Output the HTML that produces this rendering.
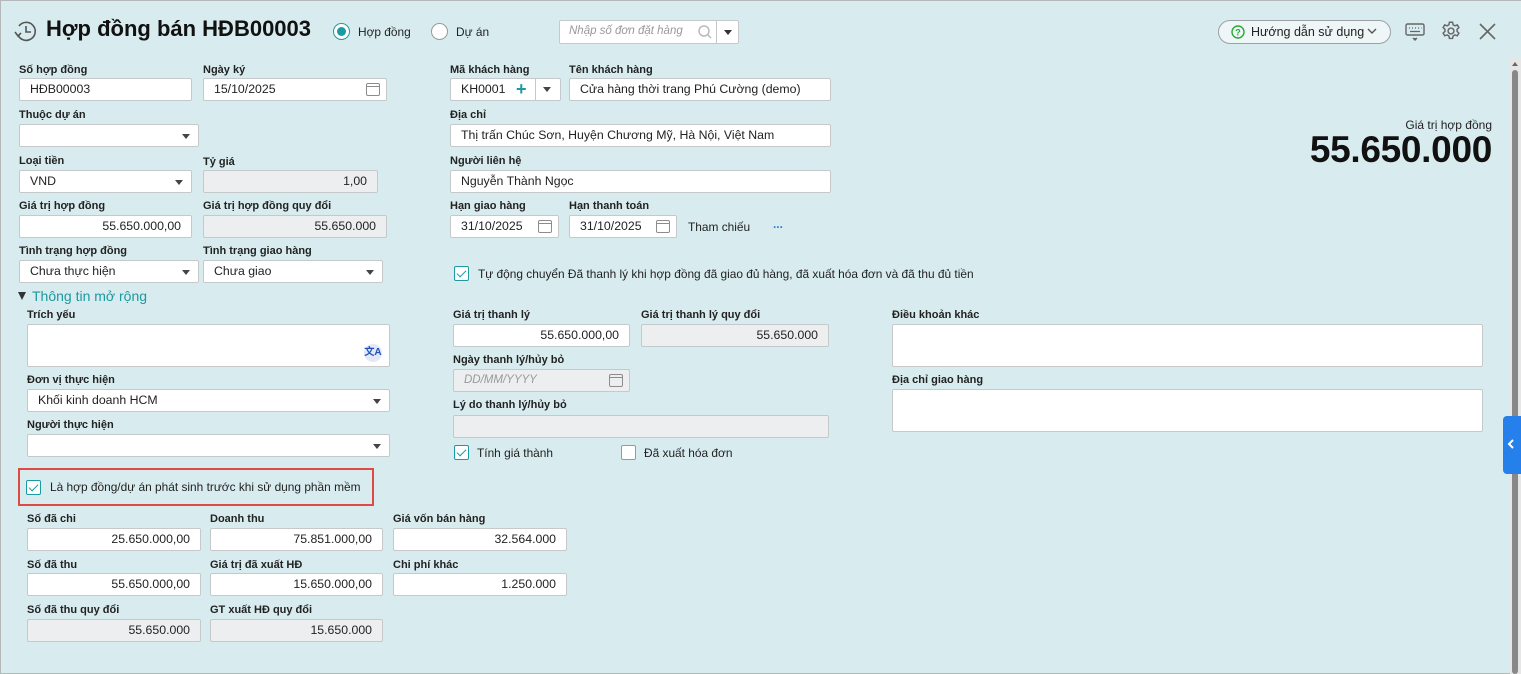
<!DOCTYPE html>
<html><head><meta charset="utf-8">
<style>
*{box-sizing:border-box;margin:0;padding:0}
body{width:1521px;height:674px;overflow:hidden;background:#d8ecef;font-family:"Liberation Sans",Arial,sans-serif;color:#212121;position:relative}
.frame{position:absolute;left:0;top:0;width:1521px;height:674px;border:1px solid #b4b8ba;border-right:none}
.a{position:absolute}
.l{position:absolute;font-size:11px;font-weight:bold;color:#222;white-space:nowrap;line-height:13px}
.i{position:absolute;height:23px;background:#fff;border:1px solid #c5c9cc;border-radius:2px;font-size:12.3px;line-height:21px;padding:0 10px;white-space:nowrap;color:#222}
.g{background:#eceef0}
.r{text-align:right}
.dd::after{content:"";position:absolute;right:8px;top:9px;border-left:4px solid transparent;border-right:4px solid transparent;border-top:5px solid #444}
.cal{position:absolute;right:6px;top:4px;width:14px;height:13px;border:1px solid #8c8c8c;border-radius:2px}
.cal::before{content:"";position:absolute;left:0;right:0;top:2px;border-top:1px solid #8c8c8c}
.cb{position:absolute;width:15px;height:15px;border:1px solid #1c9aa3;background:#fff;border-radius:2px}
.cb.c::after{content:"";position:absolute;left:4px;top:1px;width:4px;height:8px;border:solid #1c9aa3;border-width:0 1.5px 1.5px 0;transform:rotate(45deg)}
.cb.u{border-color:#999}
.t{position:absolute;font-size:11.9px;white-space:nowrap;color:#222;line-height:15px}
</style></head><body>
<div class="frame"></div>

<!-- header -->
<svg class="a" style="left:13px;top:19px" width="26" height="26" viewBox="0 0 26 26" fill="none" stroke="#555" stroke-width="1.6"><path d="M5 16 A9 9 0 1 0 6 7"/><path d="M13 7v6h5"/><path d="M2 13l3 4 3-3"/></svg>
<div class="a" style="left:46px;top:16px;font-size:22px;font-weight:bold;color:#111;white-space:nowrap">Hợp đồng bán HĐB00003</div>
<div class="a" style="left:333px;top:23px;width:17px;height:17px;border:1px solid #1c9aa3;border-radius:50%;background:#fff"><div class="a" style="left:3px;top:3px;width:9px;height:9px;border-radius:50%;background:#1c9aa3"></div></div>
<div class="t" style="left:358px;top:25px">Hợp đồng</div>
<div class="a" style="left:431px;top:23px;width:17px;height:17px;border:1px solid #999;border-radius:50%;background:#fff"></div>
<div class="t" style="left:456px;top:25px">Dự án</div>
<div class="i" style="left:559px;top:20px;width:180px;height:24px;padding-left:9px;color:#999;font-style:italic;font-size:11.5px">Nhập số đơn đặt hàng</div>
<svg class="a" style="left:697px;top:24px" width="16" height="16" viewBox="0 0 16 16" fill="none" stroke="#bbb" stroke-width="1.5"><circle cx="7" cy="7" r="5"/><path d="M11 11l3 3"/></svg>
<div class="a" style="left:716px;top:21px;width:1px;height:22px;background:#c5c9cc"></div>
<div class="a" style="left:724px;top:30px;border-left:4px solid transparent;border-right:4px solid transparent;border-top:5px solid #333"></div>

<div class="a" style="left:1218px;top:20px;width:173px;height:24px;border:1px solid #9aa0a4;border-radius:12px;background:#eef6f7"></div>
<svg class="a" style="left:1231px;top:25px" width="14" height="14" viewBox="0 0 14 14"><circle cx="7" cy="7" r="6" fill="none" stroke="#2aa836" stroke-width="1.4"/><text x="7" y="10.5" font-size="9" font-weight="bold" text-anchor="middle" fill="#2aa836" font-family="Liberation Sans">?</text></svg>
<div class="t" style="left:1251px;top:25px;font-size:12.5px">Hướng dẫn sử dụng</div>
<svg class="a" style="left:1367px;top:27px" width="10" height="8" viewBox="0 0 10 8" fill="none" stroke="#555" stroke-width="1.4"><path d="M1 2l4 4 4-4"/></svg>
<svg class="a" style="left:1405px;top:22px" width="20" height="20" viewBox="0 0 20 20" fill="none" stroke="#666" stroke-width="1.4"><rect x="1" y="2" width="18" height="11" rx="1.5"/><path d="M4 6h1M7 6h1M10 6h1M13 6h1M16 6h0.5M5 9.5h10" stroke-width="1.2"/><path d="M8 16l2 2 2-2" fill="#666"/></svg>
<svg class="a" style="left:1440px;top:20px" width="22" height="22" viewBox="0 0 24 24" fill="none" stroke="#666" stroke-width="1.6"><circle cx="12" cy="12" r="3.2"/><path d="M10.3 2.5h3.4l.6 2.7 2 1.1 2.6-.9 1.7 2.9-2 1.9v2.2l2 1.9-1.7 2.9-2.6-.9-2 1.1-.6 2.7h-3.4l-.6-2.7-2-1.1-2.6.9-1.7-2.9 2-1.9v-2.2l-2-1.9 1.700-2.9 2.6.9 2-1.1z"/></svg>
<svg class="a" style="left:1479px;top:23px" width="17" height="17" viewBox="0 0 17 17" stroke="#666" stroke-width="1.6"><path d="M1 1l15 15M16 1L1 16"/></svg>

<!-- scrollbar -->
<div class="a" style="left:1510px;top:58px;width:11px;height:616px;background:#e6e6e6"></div>
<div class="a" style="left:1512px;top:70px;width:6px;height:604px;background:#888;border-radius:3px"></div>
<div class="a" style="left:1512px;top:62px;border-left:3px solid transparent;border-right:3px solid transparent;border-bottom:4px solid #666"></div>
<div class="a" style="left:1503px;top:416px;width:18px;height:58px;background:#2680eb;border-radius:4px 0 0 4px"></div>
<svg class="a" style="left:1507px;top:439px" width="8" height="10" viewBox="0 0 8 10" fill="none" stroke="#fff" stroke-width="2"><path d="M6 1L2 5l4 4"/></svg>

<!-- big value -->
<div class="a" style="right:29px;top:118px;font-size:12px;color:#222">Giá trị hợp đồng</div>
<div class="a" style="right:29px;top:129px;font-size:37px;font-weight:bold;color:#111;letter-spacing:-0.3px">55.650.000</div>

<!-- left column -->
<div class="l" style="left:19px;top:64px">Số hợp đồng</div>
<div class="i" style="left:19px;top:78px;width:173px">HĐB00003</div>
<div class="l" style="left:203px;top:64px">Ngày ký</div>
<div class="i" style="left:203px;top:78px;width:184px">15/10/2025<span class="cal"></span></div>
<div class="l" style="left:19px;top:109px">Thuộc dự án</div>
<div class="i dd" style="left:19px;top:124px;width:180px"></div>
<div class="l" style="left:19px;top:155px">Loại tiền</div>
<div class="i dd" style="left:19px;top:170px;width:173px">VND</div>
<div class="l" style="left:203px;top:156px">Tỷ giá</div>
<div class="i g r" style="left:203px;top:170px;width:175px">1,00</div>
<div class="l" style="left:19px;top:200px">Giá trị hợp đồng</div>
<div class="i r" style="left:19px;top:215px;width:173px">55.650.000,00</div>
<div class="l" style="left:203px;top:200px">Giá trị hợp đồng quy đổi</div>
<div class="i g r" style="left:203px;top:215px;width:184px">55.650.000</div>
<div class="l" style="left:19px;top:245px">Tình trạng hợp đồng</div>
<div class="i dd" style="left:19px;top:260px;width:180px">Chưa thực hiện</div>
<div class="l" style="left:203px;top:245px">Tình trạng giao hàng</div>
<div class="i dd" style="left:203px;top:260px;width:180px">Chưa giao</div>

<!-- right upper -->
<div class="l" style="left:450px;top:64px">Mã khách hàng</div>
<div class="i" style="left:450px;top:78px;width:111px">KH0001</div>
<div class="a" style="left:516px;top:81px;color:#1c9aa3;font-size:18px;line-height:16px;font-weight:bold">+</div>
<div class="a" style="left:535px;top:79px;width:1px;height:21px;background:#c5c9cc"></div>
<div class="a" style="left:543px;top:87px;border-left:4px solid transparent;border-right:4px solid transparent;border-top:5px solid #444"></div>
<div class="l" style="left:569px;top:64px">Tên khách hàng</div>
<div class="i" style="left:569px;top:78px;width:262px">Cửa hàng thời trang Phú Cường (demo)</div>
<div class="l" style="left:450px;top:109px">Địa chỉ</div>
<div class="i" style="left:450px;top:124px;width:381px">Thị trấn Chúc Sơn, Huyện Chương Mỹ, Hà Nội, Việt Nam</div>
<div class="l" style="left:450px;top:155px">Người liên hệ</div>
<div class="i" style="left:450px;top:170px;width:381px">Nguyễn Thành Ngọc</div>
<div class="l" style="left:450px;top:200px">Hạn giao hàng</div>
<div class="i" style="left:450px;top:215px;width:109px">31/10/2025<span class="cal"></span></div>
<div class="l" style="left:569px;top:200px">Hạn thanh toán</div>
<div class="i" style="left:569px;top:215px;width:108px">31/10/2025<span class="cal"></span></div>
<div class="t" style="left:688px;top:220px">Tham chiếu</div>
<div class="t" style="left:773px;top:217px;color:#2680eb;font-weight:bold">...</div>
<div class="cb c" style="left:454px;top:266px"></div>
<div class="t" style="left:478px;top:267px">Tự động chuyển Đã thanh lý khi hợp đồng đã giao đủ hàng, đã xuất hóa đơn và đã thu đủ tiền</div>

<!-- expand -->
<div class="a" style="left:18px;top:292px;border-left:4.5px solid transparent;border-right:4.5px solid transparent;border-top:8px solid #333"></div>
<div class="a" style="left:32px;top:288px;font-size:14px;color:#1a9aa0">Thông tin mở rộng</div>

<div class="l" style="left:27px;top:309px">Trích yếu</div>
<div class="i" style="left:27px;top:324px;width:363px;height:43px"></div>
<div class="a" style="left:364px;top:344px;width:18px;height:18px;border-radius:50%;background:#e2e8f5;color:#1f4fbf;font-size:10px;font-weight:bold;text-align:center;line-height:18px">文A</div>
<div class="l" style="left:27px;top:374px">Đơn vị thực hiện</div>
<div class="i dd" style="left:27px;top:389px;width:363px">Khối kinh doanh HCM</div>
<div class="l" style="left:27px;top:419px">Người thực hiện</div>
<div class="i dd" style="left:27px;top:434px;width:363px"></div>

<div class="a" style="left:18px;top:468px;width:356px;height:38px;border:2px solid #e04a44"></div>
<div class="cb c" style="left:26px;top:480px"></div>
<div class="t" style="left:50px;top:480px">Là hợp đồng/dự án phát sinh trước khi sử dụng phần mềm</div>

<div class="l" style="left:27px;top:513px">Số đã chi</div>
<div class="i r" style="left:27px;top:528px;width:174px">25.650.000,00</div>
<div class="l" style="left:210px;top:513px">Doanh thu</div>
<div class="i r" style="left:210px;top:528px;width:173px">75.851.000,00</div>
<div class="l" style="left:393px;top:513px">Giá vốn bán hàng</div>
<div class="i r" style="left:393px;top:528px;width:174px">32.564.000</div>
<div class="l" style="left:27px;top:559px">Số đã thu</div>
<div class="i r" style="left:27px;top:573px;width:174px">55.650.000,00</div>
<div class="l" style="left:210px;top:559px">Giá trị đã xuất HĐ</div>
<div class="i r" style="left:210px;top:573px;width:173px">15.650.000,00</div>
<div class="l" style="left:393px;top:559px">Chi phí khác</div>
<div class="i r" style="left:393px;top:573px;width:174px">1.250.000</div>
<div class="l" style="left:27px;top:604px">Số đã thu quy đổi</div>
<div class="i g r" style="left:27px;top:619px;width:174px">55.650.000</div>
<div class="l" style="left:210px;top:604px">GT xuất HĐ quy đổi</div>
<div class="i g r" style="left:210px;top:619px;width:173px">15.650.000</div>

<!-- middle -->
<div class="l" style="left:453px;top:309px">Giá trị thanh lý</div>
<div class="i r" style="left:453px;top:324px;width:177px">55.650.000,00</div>
<div class="l" style="left:641px;top:309px">Giá trị thanh lý quy đổi</div>
<div class="i g r" style="left:641px;top:324px;width:188px">55.650.000</div>
<div class="l" style="left:453px;top:354px">Ngày thanh lý/hủy bỏ</div>
<div class="i g" style="left:453px;top:369px;width:177px;color:#999;font-style:italic;font-size:11.5px">DD/MM/YYYY<span class="cal"></span></div>
<div class="l" style="left:453px;top:399px">Lý do thanh lý/hủy bỏ</div>
<div class="i g" style="left:453px;top:415px;width:376px"></div>
<div class="cb c" style="left:454px;top:445px"></div>
<div class="t" style="left:477px;top:446px">Tính giá thành</div>
<div class="cb u" style="left:621px;top:445px"></div>
<div class="t" style="left:644px;top:446px">Đã xuất hóa đơn</div>

<div class="l" style="left:892px;top:309px">Điều khoản khác</div>
<div class="i" style="left:892px;top:324px;width:591px;height:43px"></div>
<div class="l" style="left:892px;top:374px">Địa chỉ giao hàng</div>
<div class="i" style="left:892px;top:389px;width:591px;height:43px"></div>
</body></html>
